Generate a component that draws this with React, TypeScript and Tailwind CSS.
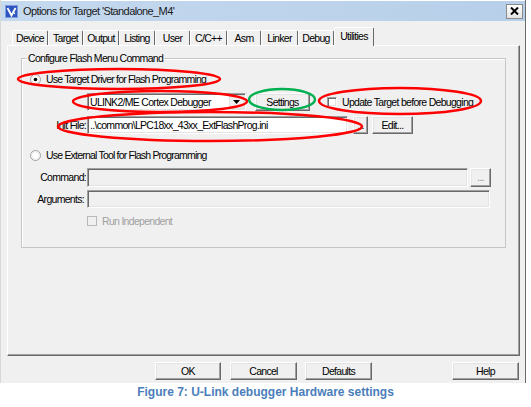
import React from 'react';

const SUNKEN =
  'border border-t-[#a0a0a0] border-l-[#a0a0a0] border-b-white border-r-white shadow-[inset_1px_1px_0_#696969,inset_-1px_-1px_0_#e3e3e3]';
const RAISED =
  'border border-t-white border-l-white border-b-[#696969] border-r-[#696969] shadow-[inset_-1px_-1px_0_#a0a0a0,inset_1px_1px_0_#e3e3e3] bg-[#f0f0f0] flex items-center justify-center';

const tabs = [
  { label: 'Device', w: 'w-[36px]' },
  { label: 'Target', w: 'w-[35px]' },
  { label: 'Output', w: 'w-[36px]' },
  { label: 'Listing', w: 'w-[36px]' },
  { label: 'User', w: 'w-[35px]' },
  { label: 'C/C++', w: 'w-[37px]' },
  { label: 'Asm', w: 'w-[34px]' },
  { label: 'Linker', w: 'w-[37px]' },
  { label: 'Debug', w: 'w-[36px]' },
];

const Radio: React.FC<{ checked?: boolean }> = ({ checked }) => (
  <svg width="11" height="11" viewBox="0 0 11 11" className="shrink-0">
    <circle cx="5.5" cy="5.5" r="5" fill="#ffffff" stroke="#a0a0a0" />
    <circle cx="5.5" cy="5.5" r="4" fill="none" stroke="#e3e3e3" />
    {checked && <circle cx="5.5" cy="5.5" r="1.8" fill="#000000" />}
  </svg>
);

const App: React.FC = () => {
  return (
    <div className="relative w-[531px] h-[407px] bg-white overflow-hidden text-[10.5px] tracking-[-0.7px] leading-[13px] text-black font-['Liberation_Sans',Arial,sans-serif]">
      <div className="w-[526px] h-[383px] bg-[#f0f0f0] border-l border-l-[#d8d8d8] border-r border-r-[#6b6b6b] flex flex-col">
        {/* title bar */}
        <div className="h-[21px] flex items-center bg-linear-to-r from-[#c5d9ef] to-[#b7cfe9] border-t border-t-white">
          <svg width="13" height="13" viewBox="0 0 13 13" className="ml-[4px]">
            <rect x="0" y="0" width="13" height="13" fill="#2f55c0" />
            <rect x="0.5" y="0.5" width="12" height="12" fill="none" stroke="#7f9ce0" />
            <path d="M2.5 3 L6.5 10.5 L10.5 3" fill="none" stroke="#ffffff" strokeWidth="1.8" />
            <path d="M8 6.5 L10 9" fill="none" stroke="#ffffff" strokeWidth="1.2" />
          </svg>
          <span className="ml-[5px] text-[11px] tracking-[-0.6px] text-[#1a1a1a]">Options for Target 'Standalone_M4'</span>
          <div className="ml-auto mr-[2px] w-[17px] h-[15px] border border-[#8a8a8a] bg-linear-to-b from-white to-[#e4e4e4] flex items-center justify-center">
            <svg width="9" height="8" viewBox="0 0 9 8">
              <path d="M1 0.5 L8 7.5 M8 0.5 L1 7.5" stroke="#000000" strokeWidth="2" />
            </svg>
          </div>
        </div>

        {/* tabs */}
        <div className="mt-[7px] h-[17px] ml-[11px] flex items-end">
          {tabs.map((t) => (
            <div
              key={t.label}
              className={`${t.w} h-[15px] border-t border-l border-t-white border-l-white border-r border-r-[#696969] rounded-t-[2px] flex items-center justify-center`}
            >
              {t.label}
            </div>
          ))}
          <div className="w-[40px] h-[19px] mb-[-1px] relative z-10 bg-[#f0f0f0] border-t border-l border-t-white border-l-white border-r border-r-[#696969] rounded-t-[2px] flex items-start justify-center pt-[2px]">
            Utilities
          </div>
        </div>

        {/* tab page */}
        <div className="ml-[6px] w-[513px] h-[311px] border border-t-white border-l-white border-r-[#696969] border-b-[#696969] shadow-[inset_-1px_-1px_0_#a0a0a0]">
          <div className="relative mt-[12px] ml-[13px] w-[485px] h-[190px] border border-[#c6c6c6] shadow-[inset_1px_1px_0_#ffffff]">
            <span className="absolute -top-[7px] left-[5px] px-[1px] bg-[#f0f0f0]">Configure Flash Menu Command</span>

            <div className="flex flex-col">
              <div className="mt-[14px] h-[12px] ml-[8px] flex items-center gap-[5px]">
                <Radio checked />
                <span className="tracking-[-0.8px]">Use Target Driver for Flash Programming</span>
              </div>

              <div className="mt-[8px] h-[18px] flex items-center">
                <div className={`ml-[65px] w-[159px] h-[18px] bg-white flex items-center ${SUNKEN}`}>
                  <span className="pl-[2px] flex-1 whitespace-nowrap">ULINK2/ME Cortex Debugger</span>
                  <div className="w-[15px] h-[14px] mr-[1px] flex items-center justify-center bg-[#f0f0f0] border border-[#e3e3e3]">
                    <svg width="7" height="4" viewBox="0 0 7 4">
                      <path d="M0 0 L7 0 L3.5 4 Z" fill="#000000" />
                    </svg>
                  </div>
                </div>
                <div className={`ml-[9px] w-[55px] h-[18px] ${RAISED}`}>Settings</div>
                <div className={`ml-[17px] w-[10px] h-[10px] bg-white ${SUNKEN}`} />
                <span className="ml-[5px] whitespace-nowrap">Update Target before Debugging</span>
              </div>

              <div className="mt-[5px] h-[18px] flex items-center">
                <span className="w-[65px] text-right pr-[1px]">Init File:</span>
                <div className={`w-[261px] h-[18px] bg-white flex items-center pl-[2px] whitespace-nowrap ${SUNKEN}`}>
                  ..\common\LPC18xx_43xx_ExtFlashProg.ini
                </div>
                <div className={`ml-[5px] w-[15px] h-[18px] ${RAISED}`}>...</div>
                <div className={`ml-[4px] w-[41px] h-[18px] ${RAISED}`}>Edit...</div>
              </div>

              <div className="mt-[15px] h-[12px] ml-[8px] flex items-center gap-[5px]">
                <Radio />
                <span className="tracking-[-0.8px]">Use External Tool for Flash Programming</span>
              </div>

              <div className="mt-[7px] h-[19px] flex items-center">
                <span className="w-[65px] text-right pr-[1px]">Command:</span>
                <div className={`w-[381px] h-[19px] bg-[#f0f0f0] ${SUNKEN}`} />
                <div className={`ml-[2px] w-[21px] h-[19px] text-[#8a8a8a] ${RAISED}`}>...</div>
              </div>

              <div className="mt-[3px] h-[18px] flex items-center">
                <span className="w-[65px] text-right pr-[3px]">Arguments:</span>
                <div className={`w-[403px] h-[18px] bg-[#f0f0f0] ${SUNKEN}`} />
              </div>

              <div className="mt-[7px] h-[12px] ml-[65px] flex items-center gap-[5px] text-[#a0a0a0]">
                <div className="w-[10px] h-[10px] border border-[#b8b8b8] bg-[#f0f0f0]" />
                <span>Run Independent</span>
              </div>
            </div>
          </div>
        </div>

        {/* buttons */}
        <div className="mt-[6px] h-[18px] flex">
          <div className={`ml-[154px] w-[66px] h-[18px] ${RAISED}`}>OK</div>
          <div className={`ml-[9px] w-[67px] h-[18px] ${RAISED}`}>Cancel</div>
          <div className={`ml-[8px] w-[67px] h-[18px] ${RAISED}`}>Defaults</div>
          <div className={`ml-[80px] w-[67px] h-[18px] ${RAISED}`}>Help</div>
        </div>
      </div>

      <div className="h-[20px] pt-[1px] text-center text-[12px] tracking-normal leading-[16px] font-bold text-[#4a7ebb] font-['Liberation_Sans',Arial,sans-serif]">
        Figure 7: U-Link debugger Hardware settings
      </div>

      {/* hand-drawn annotation marks */}
      <svg className="absolute left-0 top-0 pointer-events-none" width="531" height="407">
        <ellipse cx="119" cy="79" rx="101" ry="10" fill="none" stroke="#ff0000" strokeWidth="2.5" />
        <ellipse cx="160" cy="101.5" rx="87" ry="10.5" fill="none" stroke="#ff0000" strokeWidth="2.5" />
        <ellipse cx="282" cy="99.5" rx="33" ry="10.5" fill="none" stroke="#00b050" strokeWidth="2.5" />
        <ellipse cx="400" cy="101" rx="81" ry="13" fill="none" stroke="#ff0000" strokeWidth="2.5" />
        <ellipse cx="210" cy="126.5" rx="152" ry="14.5" fill="none" stroke="#ff0000" strokeWidth="2.5" />
      </svg>
    </div>
  );
};

export default App;
